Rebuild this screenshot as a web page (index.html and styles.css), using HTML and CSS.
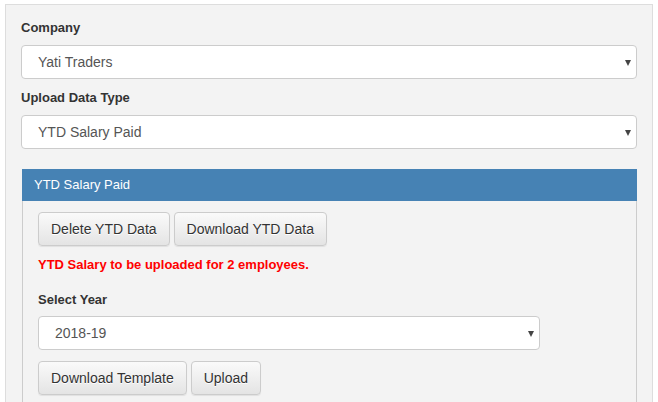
FILE: index.html
```html
<!DOCTYPE html>
<html lang="en">
<head>
  <meta charset="UTF-8">
  <meta name="viewport" content="width=device-width, initial-scale=1.0">
  <title>Upload Data</title>
  <link rel="stylesheet" href="styles.css">
</head>
<body>
  <div class="well">
    <div class="form-group">
      <label for="company">Company</label>
      <div class="select-wrap">
        <select id="company" class="form-control">
          <option>Yati Traders</option>
        </select>
      </div>
    </div>
    <div class="form-group">
      <label for="data-type">Upload Data Type</label>
      <div class="select-wrap">
        <select id="data-type" class="form-control">
          <option>YTD Salary Paid</option>
        </select>
      </div>
    </div>

    <div class="panel">
      <div class="panel-heading">YTD Salary Paid</div>
      <div class="panel-body">
        <div class="btn-row">
          <button class="btn">Delete YTD Data</button>
          <button class="btn">Download YTD Data</button>
        </div>
        <p class="notice">YTD Salary to be uploaded for 2 employees.</p>
        <div class="form-group year-group">
          <label for="year">Select Year</label>
          <div class="select-wrap">
            <select id="year" class="form-control">
              <option>2018-19</option>
            </select>
          </div>
        </div>
        <div class="btn-row">
          <button class="btn">Download Template</button>
          <button class="btn">Upload</button>
        </div>
      </div>
    </div>
  </div>
</body>
</html>
```

FILE: styles.css
```css
* {
  margin: 0;
  padding: 0;
  box-sizing: border-box;
}

html, body {
  overflow: hidden;
}

body {
  background: #ffffff;
  font-family: "Liberation Sans", Arial, sans-serif;
  font-size: 14px;
  line-height: 20px;
  color: #333;
}

.well {
  margin: 4px 5px 0 5px;
  padding: 13px 15px 20px 15px;
  background: #f3f3f3;
  border: 1px solid #dddddd;
  min-height: 420px;
}

.form-group {
  margin-bottom: 9px;
}

label {
  display: block;
  font-size: 13px;
  font-weight: bold;
  margin-bottom: 7px;
  color: #333;
}

.select-wrap {
  position: relative;
}

.select-wrap::after {
  content: "";
  position: absolute;
  right: 6px;
  top: 50%;
  margin-top: -2px;
  border-left: 3.5px solid transparent;
  border-right: 3.5px solid transparent;
  border-top: 6px solid #444;
  pointer-events: none;
}

.form-control {
  display: block;
  width: 100%;
  height: 34px;
  padding: 0 24px 0 16px;
  font-family: inherit;
  font-size: 14px;
  color: #555;
  background: #ffffff;
  border: 1px solid #cccccc;
  border-radius: 4px;
  appearance: none;
  -webkit-appearance: none;
}

.panel {
  margin: 20px 0 0 1px;
}

.panel-heading {
  background: #4682b4;
  color: #ffffff;
  font-size: 13px;
  padding: 6px 12px;
  height: 32px;
}

.panel-body {
  border: 1px solid #cccccc;
  border-top: none;
  padding: 11px 15px 40px 15px;
}

.btn-row {
  display: flex;
  gap: 4px;
}

.btn {
  height: 34px;
  padding: 0 12px;
  font-family: inherit;
  font-size: 14px;
  color: #333;
  background: linear-gradient(to bottom, #fafafa 0%, #e4e4e4 100%);
  border: 1px solid #cccccc;
  border-radius: 4px;
  box-shadow: 0 1px 1px rgba(0, 0, 0, 0.075);
  text-shadow: 0 1px 0 #fff;
  cursor: pointer;
}

.notice {
  margin-top: 9px;
  font-size: 13px;
  color: #ff0000;
  font-weight: bold;
}

.year-group {
  width: 502px;
  margin-top: 15px;
  margin-bottom: 11px;
}

.year-group label {
  margin-bottom: 6px;
}
```
